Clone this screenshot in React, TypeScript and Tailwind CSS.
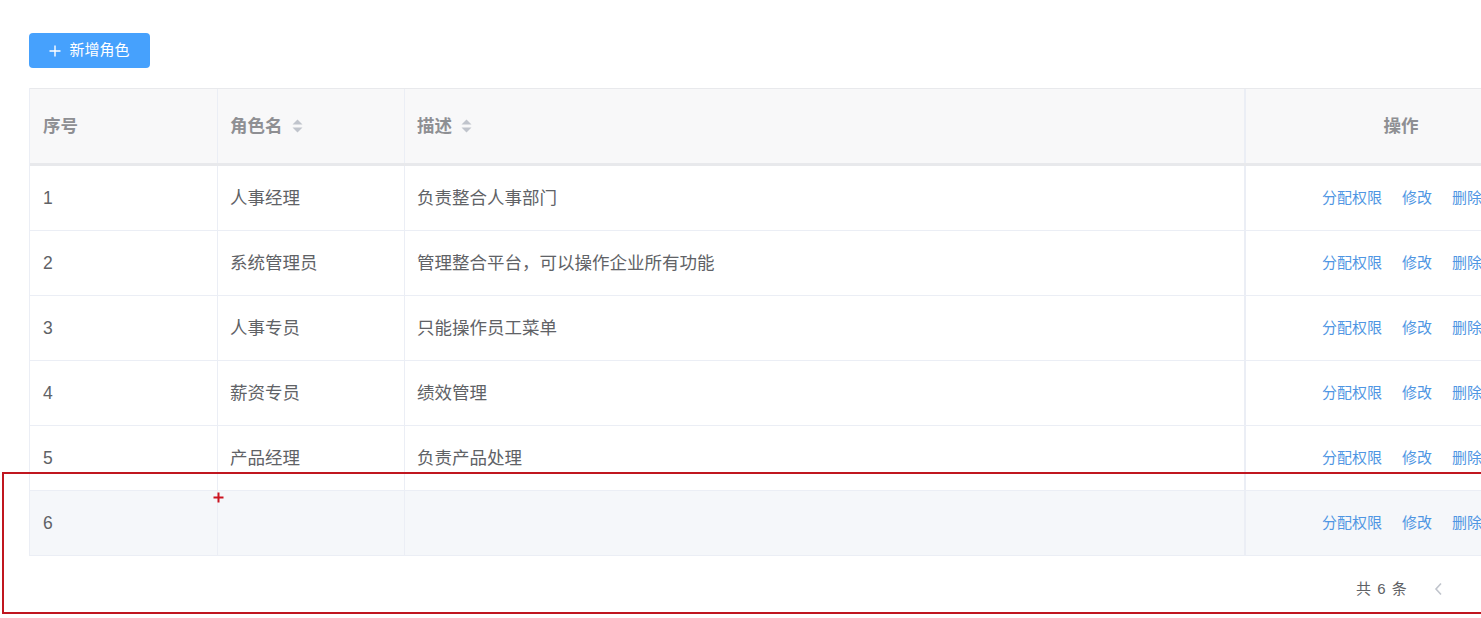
import React from "react";

const rows = [
  { id: 1, name: "人事经理", desc: "负责整合人事部门" },
  { id: 2, name: "系统管理员", desc: "管理整合平台，可以操作企业所有功能" },
  { id: 3, name: "人事专员", desc: "只能操作员工菜单" },
  { id: 4, name: "薪资专员", desc: "绩效管理" },
  { id: 5, name: "产品经理", desc: "负责产品处理" },
  { id: 6, name: "", desc: "" },
];

function SortCaret() {
  return (
    <svg width="11" height="14" viewBox="0 0 11 14" className="ml-[9px]">
      <path d="M5.5 0.5 L10.5 5.5 L0.5 5.5 Z" fill="#c0c4cc" />
      <path d="M0.5 8.5 L10.5 8.5 L5.5 13.5 Z" fill="#c0c4cc" />
    </svg>
  );
}

export default function App() {
  return (
    <div
      className="relative w-[1481px] h-[618px] overflow-hidden bg-white"
      style={{ fontFamily: '"Liberation Sans", "Noto Sans CJK SC", sans-serif' }}
    >
      <div className="pl-[29px] pt-[33px]">
        <button className="flex h-[35px] w-[121px] items-center justify-center gap-[8px] rounded-[4px] bg-[#46a1fd] text-[15px] text-white">
          <svg width="12" height="12" viewBox="0 0 12 12">
            <path d="M6 0.5 V11.5 M0.5 6 H11.5" stroke="white" strokeWidth="1.4" />
          </svg>
          <span>新增角色</span>
        </button>

        <div className="mt-[20px] w-[1530px] border-l border-[#ebeef5]">
          {/* header */}
          <div className="flex h-[78px] border-t border-b-[3px] border-[#e8e9ec] bg-[#f8f8f9] text-[17.5px] font-bold text-[#8e8f93]">
            <div className="flex w-[188px] items-center border-r border-[#ebeef5] pl-[13px]">序号</div>
            <div className="flex w-[187px] items-center border-r border-[#ebeef5] pl-[12px]">
              角色名
              <SortCaret />
            </div>
            <div className="flex w-[839px] items-center pl-[12px]">
              描述
              <SortCaret />
            </div>
            <div className="flex w-[312px] items-center justify-center border-l-2 border-[#ebeef5]">
              操作
            </div>
          </div>
          {/* body */}
          {rows.map((r) => (
            <div
              key={r.id}
              className={`flex h-[65px] border-b border-[#ebeef5] text-[17.5px] text-[#606266] ${
                r.id === 6 ? "bg-[#f5f7fa]" : "bg-white"
              }`}
            >
              <div className="flex w-[188px] items-center border-r border-[#ebeef5] pl-[13px]">{r.id}</div>
              <div className="flex w-[187px] items-center border-r border-[#ebeef5] pl-[12px]">{r.name}</div>
              <div className="flex w-[839px] items-center pl-[12px]">{r.desc}</div>
              <div className="flex w-[312px] items-center justify-center gap-[20px] border-l-2 border-[#ebeef5] pl-[2px] text-[15px] text-[#4f96e3]">
                <span>分配权限</span>
                <span>修改</span>
                <span>删除</span>
              </div>
            </div>
          ))}
        </div>

        {/* pagination */}
        <div className="flex h-[66px] items-center pl-[1327px] text-[15px] text-[#606266]">
          <span className="tracking-[1px]">共 6 条</span>
          <svg width="9" height="14" viewBox="0 0 9 14" className="ml-[26px]">
            <path d="M7 1.5 L2 7 L7 12.5" stroke="#c0c4cc" strokeWidth="1.6" fill="none" />
          </svg>
        </div>
      </div>

      {/* red annotation rectangle */}
      <div className="absolute left-[2px] top-[472px] h-[142px] w-[1500px] border-2 border-[#c0161f]" />
      {/* red cross */}
      <svg width="11" height="11" viewBox="0 0 11 11" className="absolute left-[213px] top-[492px]">
        <path d="M5.5 0.5 V10.5 M0.5 5.5 H10.5" stroke="#cc1420" strokeWidth="2" />
      </svg>
    </div>
  );
}
